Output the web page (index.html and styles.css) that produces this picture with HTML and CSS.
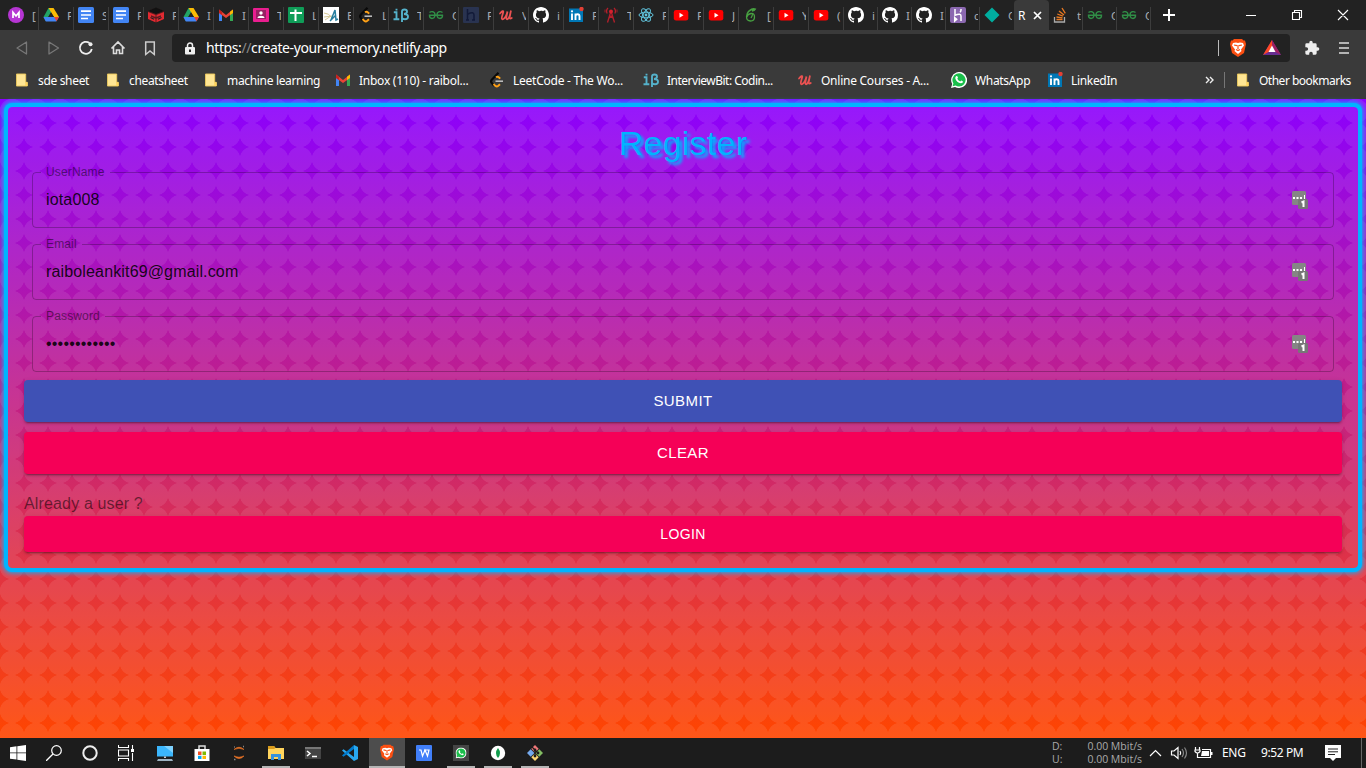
FILE: index.html
```html
<!DOCTYPE html>
<html lang="en">
<head>
<meta charset="utf-8">
<title>Register</title>
<link rel="stylesheet" href="styles.css">
</head>
<body>
<svg class="defs" width="0" height="0">
<symbol id="mm" viewBox="0 0 16 16"><circle cx="8" cy="8" r="8" fill="#b635d3"/><path d="M5 11V5.400L8 9l3-3.600V11" fill="none" stroke="#fff" stroke-width="1.700"/></symbol>
<symbol id="drive" viewBox="0 0 16 16"><path d="M5.500 1h5L5 10.500 2.700 14 .5 10z" fill="#21a464"/><path d="M5.500 1h5L16 10h-5z" fill="#fbbc04"/><path d="M.5 10l2.300 4.500h10.500L16 10z" fill="#4285f4"/><path d="M8 5.400L10.800 10H5.200z" fill="#222"/><path d="M11 10h5l-2.500 4.300z" fill="#ea4335"/></symbol>
<symbol id="docs" viewBox="0 0 16 16"><rect width="16" height="16" rx="1.500" fill="#4285f4"/><path d="M3 4.200h10M3 8h10M3 11.500h7" stroke="#fff" stroke-width="1.700"/></symbol>
<symbol id="cube" viewBox="0 0 16 16"><path d="M0 4l8-3 8 3v8l-8 3.500L0 12z" fill="#5a1b1f"/><path d="M0 4l8-3.500L16 4 8 7z" fill="#111"/><path d="M0 5l7.500 3v2L3 8.300v1.500l4.500 2v3.500L0 12zM16 5L8.500 8v2L13 8.300v1.500l-4.500 2v3.500L16 12z" fill="#e12a31"/><path d="M2.500 10.500l3.500 1.700M13.500 10.500L10 12.200" stroke="#222" stroke-width="1.200"/></symbol>
<symbol id="gmail" viewBox="0 0 16 16"><path d="M1 3v11h3V6z" fill="#4285f4"/><path d="M12 6v8h3V3z" fill="#34a853"/><path d="M1 2.500L8 8l7-5.500V6l-7 5-7-5z" fill="#ea4335"/><path d="M12 4.800l3-2.300V6l-3 2z" fill="#fbbc04"/><path d="M1 2.500l3 2.300V8L1 6z" fill="#c5221f"/></symbol>
<symbol id="class" viewBox="0 0 16 16"><rect y="1" width="16" height="14" rx="1" fill="#e91e8f"/><path d="M3 3h10v9H3z" fill="#982063"/><circle cx="8" cy="6" r="1.700" fill="#fff"/><path d="M4.500 11c0-3 7-3 7 0z" fill="#fff"/></symbol>
<symbol id="sheet" viewBox="0 0 16 16"><rect width="16" height="16" rx="1" fill="#0f9d58"/><path d="M2 6h12M7.500 2.500V14" stroke="#fff" stroke-width="2"/></symbol>
<symbol id="wave" viewBox="0 0 16 16"><path d="M0 0h16v16H0z" fill="#fff"/><path d="M1 6q5 0 8 5M1 10l8-1M2 13l6-4" stroke="#d6c994" fill="none"/><path d="M8 13l4-10 1 10 2-1M7 14l6-6" stroke="#277e9e" fill="none" stroke-width="1.500"/></symbol>
<symbol id="leet" viewBox="0 0 16 16"><path d="M9.500 .8L3 7.500q-1.800 2 0 3.700l2.200 2.500" fill="none" stroke="#090909" stroke-width="2.200"/><path d="M4.500 12l1.800 1.800q1.500 1.200 3 0l1.700-1.600M7 5.300q1.500-1 3 .2L11.200 6.700" fill="none" stroke="#ffa116" stroke-width="1.900"/><path d="M6.500 9.200H14" stroke="#bbb" stroke-width="1.600"/></symbol>
<symbol id="ib" viewBox="0 0 16 16"><path d="M.8 5.300h2.700V12M.5 12.200h5.800M3.500 1.800v1.800M9 15V4.500Q9 2.500 11.500 2.500 14 2.500 14 4.800q0 2-3 2.200 4 .1 4 2.700 0 2.500-3 2.500-2 0-3-1" fill="none" stroke="#55b2cb" stroke-width="1.900"/></symbol>
<symbol id="gfg" viewBox="0 0 16 16"><path d="M1.500 5.500Q3 4.300 4.800 4.700 7.200 5.500 7 8.500 6.500 11.500 4 11.500 1.300 11.200 1.500 8.300h13q.2 2.900-2.500 3.200-2.500 0-3-3Q8.800 5.500 11.200 4.700 13 4.300 14.500 5.500" fill="none" stroke="#308d46" stroke-width="1.400"/></symbol>
<symbol id="hh" viewBox="0 0 16 16"><rect width="16" height="16" rx="1" fill="#293350"/><path d="M4.500 2v11M3 13h3M5 7q6-3 6 1v5M9 13h3" fill="none" stroke="#121a38" stroke-width="1.500"/></symbol>
<symbol id="ud" viewBox="0 0 16 16"><path d="M2 6.500Q5.500 2.500 5.300 5L4 9.500q-.8 3.300 1 2.700Q7.800 11 9.500 4.500L8.500 9.500q-.6 3.200 1 2.700Q11.600 11 13 3.500l-1.200 6q-.5 3.200 2 1.500" fill="none" stroke="#eb5252" stroke-width="1.700" stroke-linecap="round"/></symbol>
<symbol id="git" viewBox="0 0 16 16"><path fill="#fff" fill-rule="evenodd" d="M8 0C3.580 0 0 3.580 0 8c0 3.540 2.290 6.530 5.470 7.590.4.070.55-.17.55-.38 0-.19-.01-.82-.01-1.490-2.010.37-2.530-.49-2.690-.94-.09-.23-.48-.94-.82-1.130-.28-.15-.68-.52-.01-.53.63-.01 1.080.58 1.230.82.72 1.210 1.870.87 2.330.66.070-.52.28-.87.510-1.070-1.780-.2-3.640-.89-3.640-3.950 0-.87.31-1.590.82-2.150-.08-.2-.36-1.020.08-2.120 0 0 .67-.21 2.200.82A7.600 7.600 0 018 3.860c.68 0 1.360.09 2 .27 1.530-1.040 2.200-.82 2.200-.82.44 1.100.16 1.920.08 2.120.51.56.82 1.270.82 2.150 0 3.070-1.870 3.750-3.650 3.950.29.25.54.73.54 1.480 0 1.070-.01 1.930-.01 2.200 0 .21.15.46.55.38A8 8 0 0016 8c0-4.420-3.580-8-8-8z"/></symbol>
<symbol id="li" viewBox="0 0 16 16"><path d="M1 1.500h14V15H1z" fill="#0077b5"/><path d="M4 6.500V13M7.500 13V6.500M7.500 9q0-1.800 2-1.800t2 2V13" fill="none" stroke="#fff" stroke-width="1.900"/><circle cx="4" cy="4.300" r="1.100" fill="#fff"/><circle cx="13.500" cy="2" r="2.200" fill="#e34035"/></symbol>
<symbol id="tower" viewBox="0 0 16 16"><path d="M8 4L4.500 15.500M8 4l3.500 11.500M6.500 8.500l4 3M9.500 8.500l-4 3M5 1q-2.500 2.500-.8 5.500M11 1q2.500 2.500.8 5.500" fill="none" stroke="#b61f2b" stroke-width="1.300"/><path d="M2 2.500v3M14 2.500v3" stroke="#9a1f29"/><circle cx="8" cy="4.500" r="2" fill="#d7202e"/></symbol>
<symbol id="react" viewBox="0 0 16 16"><g fill="none" stroke="#61c5de"><ellipse cx="8" cy="8" rx="7" ry="2.800"/><ellipse cx="8" cy="8" rx="7" ry="2.800" transform="rotate(60 8 8)"/><ellipse cx="8" cy="8" rx="7" ry="2.800" transform="rotate(120 8 8)"/></g><circle cx="8" cy="8" r="1.400" fill="#61c5de"/></symbol>
<symbol id="yt" viewBox="0 0 16 16"><rect x=".8" y="3" width="14.500" height="10.500" rx="2.300" fill="red"/><path d="M6.500 5.800v5L10.500 8.300z" fill="#fff"/></symbol>
<symbol id="six" viewBox="0 0 16 16"><path d="M11 2Q4 3 3.500 9.500 3.500 14 7.500 14q4 0 4-4T8 6.500Q4.500 7 3.800 10M8 11q2-3 1-4M6.500 3.500q3-2.800 6-1.500-1 2-3.500 2" fill="none" stroke="#47a141" stroke-width="1.300"/></symbol>
<symbol id="her" viewBox="0 0 16 16"><rect width="16" height="16" rx="2" fill="#8b68b0"/><path d="M5 2v6.200Q11 6 11 9v5M11 2v1q0 1.300-1 2.300M4.700 10.500V14l2-1.800z" fill="none" stroke="#fff" stroke-width="1.500"/></symbol>
<symbol id="dia" viewBox="0 0 16 16"><path d="M8 .5L15.500 8 8 15.500.5 8z" fill="#00ad9f"/></symbol>
<symbol id="so" viewBox="0 0 16 16"><path d="M1.500 10v5h10v-5" fill="none" stroke="#aaa" stroke-width="1.300"/><path d="M3.500 12.500h6M3.500 10l6 .8M4.300 7l5.600 2.200M6 4l5 4M9 1l3.300 5.300" stroke="#e87922" stroke-width="1.300"/></symbol>
<symbol id="folder" viewBox="0 0 13 14"><path d="M.5.500h10v9h1.800v4H.5z" fill="#ffe694" stroke="#edc95c"/><path d="M10 9.500v4h2.300v-4z" fill="#ffd35d"/></symbol>
<symbol id="wa" viewBox="0 0 16 16"><path d="M0 16l1.200-4A8 8 0 118 16a8 8 0 01-4-1z" fill="#fff"/><path d="M1.600 14.300l.8-2.800A6.600 6.600 0 118 14.600c-1.300 0-2.400-.4-3.300-1z" fill="#1abf4b"/><path d="M5 4.200q1-.7 1.500.2l.5 1.300-.7 1q1 2 3 2.800l1-1 1.700 1q.2 1.600-2 1.800Q5.500 10.500 4.300 6.500 4.200 5 5 4.200z" fill="#fff"/></symbol>
<symbol id="brave" viewBox="0 0 16 18"><path d="M4 0h8l1.500 1.500H15L16 5l-2 9-6 4-6-4L0 5l1-3.500h1.500z" fill="#fb4f12"/><path d="M3 4l3-.5L8 4l2-.5 3 .5 1 2.500-3 4 .5 1.500L8 15l-3.500-3 .5-1.500-3-4z" fill="#fff"/><path d="M4 6l3 .7M12 6l-3 .7M8 6v4M6 10.500l2 1 2-1" fill="none" stroke="#fb4f12" stroke-width="1.200"/></symbol>
<symbol id="keyicon" viewBox="0 0 16 18"><rect width="14" height="14" rx="1.500" fill="#858585"/><rect x="6" y="8" width="10" height="10" rx="1.500" fill="#777"/><path d="M1 7h2M4.500 7h2M8 7h2" stroke="#fff" stroke-width="2"/><path d="M12.500 4v4" stroke="#fff"/><path d="M9.500 11.500l2-1V16" fill="none" stroke="#fff" stroke-width="2"/></symbol>
</svg>

<header class="tabs">
<div class="tab"><svg><use href="#mm"/></svg><span>[</span></div><div class="tab"><svg><use href="#drive"/></svg><span>F</span></div><div class="tab"><svg><use href="#docs"/></svg><span>S</span></div><div class="tab"><svg><use href="#docs"/></svg><span>F</span></div><div class="tab"><svg><use href="#cube"/></svg><span>F</span></div><div class="tab"><svg><use href="#drive"/></svg><span>I</span></div><div class="tab"><svg><use href="#gmail"/></svg><span>I</span></div><div class="tab"><svg><use href="#class"/></svg><span>T</span></div><div class="tab"><svg><use href="#sheet"/></svg><span>L</span></div><div class="tab"><svg><use href="#wave"/></svg><span>E</span></div><div class="tab"><svg><use href="#leet"/></svg><span>L</span></div><div class="tab"><svg><use href="#ib"/></svg><span>T</span></div><div class="tab"><svg><use href="#gfg"/></svg><span>C</span></div><div class="tab"><svg><use href="#hh"/></svg><span>F</span></div><div class="tab"><svg><use href="#ud"/></svg><span>V</span></div><div class="tab"><svg><use href="#git"/></svg><span>i</span></div><div class="tab"><svg><use href="#li"/></svg><span>F</span></div><div class="tab"><svg><use href="#tower"/></svg><span>T</span></div><div class="tab"><svg><use href="#react"/></svg><span>F</span></div><div class="tab"><svg><use href="#yt"/></svg><span>F</span></div><div class="tab"><svg><use href="#yt"/></svg><span>J</span></div><div class="tab"><svg><use href="#six"/></svg><span>[</span></div><div class="tab"><svg><use href="#yt"/></svg><span>Y</span></div><div class="tab"><svg><use href="#yt"/></svg><span>(</span></div>
<div class="tab slim"><svg><use href="#git"/></svg><span>i</span></div><div class="tab slim"><svg><use href="#git"/></svg><span>I</span></div><div class="tab slim"><svg><use href="#git"/></svg><span>I</span></div><div class="tab slim"><svg><use href="#her"/></svg><span>c</span></div><div class="tab slim last"><svg><use href="#dia"/></svg><span>C</span></div>
<div class="tab active"><span>R</span><svg class="close" viewBox="0 0 9 9"><path d="M1 1l7 7M8 1L1 8" stroke="#fff" stroke-width="1.700"/></svg></div>
<div class="tab slim"><svg><use href="#so"/></svg><span>t</span></div><div class="tab slim"><svg><use href="#gfg"/></svg><span>C</span></div><div class="tab slim"><svg><use href="#gfg"/></svg><span>C</span></div>
<svg class="plus" viewBox="0 0 12 12"><path d="M6 0v12M0 6h12" stroke="#fff" stroke-width="2"/></svg>
<svg class="winctl" viewBox="0 0 104 12"><path d="M0 6.500h10M46.500 3.500h7v7h-7zM48.500 3.500v-2h7v7h-2M92 1l10 10M102 1L92 11" fill="none" stroke="#fff" stroke-width="1.100"/></svg>
</header>

<nav class="toolbar">
<svg class="nav" viewBox="0 0 170 28"><g fill="none"><path d="M26.500 8v12L17 14zM49 8v12l9.500-6z" stroke="#777" stroke-width="1.300" stroke-linejoin="round"/><path d="M89.500 9A6 6 0 1091.800 15" stroke="#eee" stroke-width="1.800"/><circle cx="90.500" cy="10.300" r="2" fill="#eee"/><path d="M111.500 14.500l6.500-6.500 6.500 6.500M113.500 13v6.500h3V16h3v3.500h3V13" stroke="#ddd" stroke-width="1.600"/><path d="M145.700 8h8.600v12.500L150 17l-4.300 3.500z" stroke="#ccc" stroke-width="1.500"/></g></svg>
<div class="address"><svg class="lock" viewBox="0 0 10 13"><path d="M2.500 6V3.500a2.500 2.500 0 015 0V6" fill="none" stroke="#eee" stroke-width="1.500"/><rect y="5" width="10" height="7.500" rx="1" fill="#eee"/><path d="M4 7.500h2v2.500H4z" fill="#222"/></svg><span class="url">https:<i>//</i>create-your-memory.netlify.app</span><b class="bar"></b><svg class="lion"><use href="#brave"/></svg><svg class="bat" viewBox="0 0 18 16"><path d="M9 0L0 15h18z" fill="#662d91"/><path d="M9 0L0 15l9-5z" fill="#ff4724"/><path d="M9 0l9 15-9-5z" fill="#9e1f63"/><path d="M9 5.500L5.500 12h7z" fill="#fff"/></svg></div>
<svg class="puzzle" viewBox="0 0 24 24"><path fill="#eee" d="M20.500 11H19V7a2 2 0 00-2-2h-4V3.500a2.500 2.500 0 00-5 0V5H4a2 2 0 00-2 2v3.800h1.500a2.700 2.700 0 010 5.400H2V20a2 2 0 002 2h3.800v-1.500a2.700 2.700 0 015.400 0V22H17a2 2 0 002-2v-4h1.500a2.500 2.500 0 000-5z"/></svg>
<svg class="menu" viewBox="0 0 10 12"><path d="M0 1h10M0 6h10M0 11h10" stroke="#ddd" stroke-width="1.500"/></svg>
</nav>

<nav class="bookmarks">
<a class="w1"><svg class="f"><use href="#folder"/></svg>sde sheet</a><a class="w2"><svg class="f"><use href="#folder"/></svg>cheatsheet</a><a class="w3"><svg class="f"><use href="#folder"/></svg>machine learning</a><a class="w4"><svg><use href="#gmail"/></svg>Inbox (110) - raibol...</a><a class="w5"><svg><use href="#leet"/></svg>LeetCode - The Wo...</a><a class="w6"><svg><use href="#ib"/></svg>InterviewBit: Codin...</a><a class="w7"><svg><use href="#ud"/></svg>Online Courses - A...</a><a class="w8"><svg><use href="#wa"/></svg>WhatsApp</a><a class="w9"><svg><use href="#li"/></svg>LinkedIn</a>
<svg class="more" viewBox="0 0 9 8"><path d="M1 1l3 3-3 3M5 1l3 3-3 3" fill="none" stroke="#eee" stroke-width="1.400"/></svg><b class="bar"></b><a class="other"><svg class="f"><use href="#folder"/></svg>Other bookmarks</a>
</nav>

<main class="page">
<form class="card">
<h4>Register</h4>
<fieldset><legend>UserName</legend><span>iota008</span><svg class="key"><use href="#keyicon"/></svg></fieldset>
<fieldset><legend>Email</legend><span>raiboleankit69@gmail.com</span><svg class="key"><use href="#keyicon"/></svg></fieldset>
<fieldset><legend>Password</legend><span class="dots">••••••••••••</span><svg class="key"><use href="#keyicon"/></svg></fieldset>
<button type="button" class="submit">SUBMIT</button>
<button type="button" class="clear">CLEAR</button>
<p>Already a user ?</p>
<button type="button" class="login">LOGIN</button>
</form>
</main>

<footer class="taskbar">
<div class="app"><svg viewBox="0 0 16 16"><path d="M0 2.300l6.500-1v6.200H0zM7.300 1.200L16 0v7.500H7.300zM0 8.300h6.500v6.300L0 13.700zM7.300 8.300H16V16l-8.700-1.200z" fill="#fff"/></svg></div>
<div class="app"><svg viewBox="0 0 16 16"><circle cx="10.500" cy="5.500" r="4.800" fill="none" stroke="#fff" stroke-width="1.200"/><path d="M7 9l-7 7" stroke="#fff" stroke-width="1.300"/></svg></div>
<div class="app"><svg viewBox="0 0 16 16"><circle cx="8" cy="8" r="6.700" fill="none" stroke="#eee" stroke-width="2"/></svg></div>
<div class="app"><svg viewBox="0 0 16 16"><path d="M.5 0v2.500h10V0M.5 5h10v6H.5zM.5 16v-2.500h10V16M14.500 0v4M14.500 8v8" fill="none" stroke="#fff" stroke-width="1.100"/><path d="M13 4h3v3h-3z" fill="#fff"/></svg></div>
<div class="app pc"><svg viewBox="0 0 16 16"><path d="M0 1h16v10.500H0z" fill="#3bb6fc"/><path d="M7 1h9v7z" fill="#7ed2ff"/><path d="M7 11.500h2V13H7z" fill="#ccc"/><path d="M1 14h14l1 2H0z" fill="#9eb3c2"/></svg></div>
<div class="app"><svg viewBox="0 0 16 16"><path d="M5 4V1h6v3" fill="none" stroke="#ddd" stroke-width="1.500"/><path d="M.5 4h15v12H.5z" fill="#fff"/><path d="M4 6.500h3.500V10H4z" fill="#f25022"/><path d="M8.500 6.500H12V10H8.500z" fill="#7fba00"/><path d="M4 10.800h3.500V14H4z" fill="#00a4ef"/><path d="M8.500 10.800H12V14H8.500z" fill="#ffb900"/></svg></div>
<div class="app"><svg viewBox="0 0 16 16"><path d="M3 4.500Q8 0 13 4.500 8 2 3 4.500zM3 11q5 5 10 0-5 2.500-10 0z" fill="#f37726" stroke="#f37726" stroke-width=".6"/><path d="M12 1.500h1M3 14.500h1.500M3 2h.8" stroke="#888" stroke-width="1.500"/></svg></div>
<div class="app open"><svg viewBox="0 0 16 16"><path d="M0 1h6l1.500 2H16v11H0z" fill="#ffd45d"/><path d="M0 1h6l1.500 2L6 4H0z" fill="#d99b1c"/><path d="M3 15V9h10v6h-3v-3H6v3z" fill="#3692dc"/></svg></div>
<div class="app"><svg viewBox="0 0 16 16"><path d="M0 2h16v12H0z" fill="#444"/><path d="M0 2h16v2H0z" fill="#777"/><path d="M2 6l3 2.500L2 11M7 11.500h5" fill="none" stroke="#fff" stroke-width="1.500"/></svg></div>
<div class="app"><svg viewBox="0 0 16 16"><path d="M12 0l4 2v12l-4 2L0 5.500l1.500-1.200L12 12V4z" fill="#28a8f0"/><path d="M12 0v4L1.500 11.800 0 10.500z" fill="#007acc"/></svg></div>
<div class="app open current"><svg class="tall"><use href="#brave"/></svg></div>
<div class="app"><svg viewBox="0 0 16 16"><rect width="16" height="16" rx="1" fill="#417ff9"/><path d="M3 5h2l1.500 6L9 5l2.500 6L13 5H8" fill="none" stroke="#fff" stroke-width="1.200"/></svg></div>
<div class="app open"><svg viewBox="0 0 16 16"><path d="M0 0h16v16H0z" fill="#454545"/><use href="#wa" x="2.500" y="2.500" width="11" height="11"/></svg></div>
<div class="app open"><svg viewBox="0 0 16 16"><circle cx="8" cy="8" r="7.200" fill="#fff"/><path d="M8 3q4 5 0 10Q4 8 8 3z" fill="#109b4b"/></svg></div>
<div class="app open"><svg viewBox="0 0 16 16"><path d="M8 0l3.700 3.700L8 7.400 4.300 3.700z" fill="#ef7879"/><path d="M3.700 4.300L7.400 8l-3.700 3.700L0 8z" fill="#75a9ed"/><path d="M12.300 4.300L16 8l-3.700 3.700L8.600 8z" fill="#83bd63"/><path d="M8 8.600l3.700 3.700L8 16l-3.700-3.700z" fill="#fcd471"/><path d="M5 2l6 6M8 5v6" stroke="#1c1c1c" stroke-width="1.200"/><circle cx="8" cy="5" r="1.400" fill="#1c1c1c"/><circle cx="8" cy="11" r="1.400" fill="#1c1c1c"/><circle cx="11" cy="8" r="1.400" fill="#1c1c1c"/></svg></div>
<div class="net"><div><span>D:</span><span>0.00 Mbit/s</span></div><div><span>U:</span><span>0.00 Mbit/s</span></div></div>
<svg class="tray" viewBox="0 0 64 16"><g fill="none" stroke="#fff" stroke-width="1.200"><path d="M1 11l5.500-5.500L12 11"/><path d="M22.500 6H25l4-3.500v11L25 10h-2.500z"/><path d="M31 6q1.500 2 0 4"/><path d="M33 4q3 4 0 8M35.500 2.500q4 5.500 0 11" stroke="#888"/><path d="M53 4.500h8.500v8H50"/><path d="M46.500 2v3M50.500 2v3M46 5h5v1.500q-2.500 3-5 0zM48.500 8v4.500h2"/></g><path d="M53 6h7v5h-8zM62 7h1.500v3H62z" fill="#fff"/></svg>
<span class="lang">ENG</span><span class="clock">9:52 PM</span>
<svg class="note" viewBox="0 0 16 16"><path d="M0 0h16v13h-5l-3 3-3-3H0z" fill="#fff"/><path d="M3 4h10M3 6.800h10M3 9.500h7" stroke="#222"/></svg><b class="edge"></b>
</footer>
</body>
</html>
```
FILE: styles.css
```css
* { box-sizing: border-box; }
body {
  margin: 0; width: 1366px; height: 768px; overflow: hidden;
  display: flex; flex-direction: column;
  font-family: "Noto Sans", "Open Sans", sans-serif; font-size: 12px; color: #fff;
  background: #222;
}
svg { display: block; flex: none; }
.defs { position: absolute; }
.tabs { height: 30px; flex: none; display: flex; align-items: center; padding-left: 4px; background: #222; }
.tab { width: 35px; height: 30px; flex: none; display: flex; align-items: center; padding-left: 4px; position: relative; }
.tab.slim { width: 34px; }
.tab > svg { width: 16px; height: 16px; }
.tab span { width: 4px; margin-left: 8px; overflow: hidden; color: #a9adb4; font-size: 11.5px; }
.tab::after { content: ""; position: absolute; right: 0; top: 7px; width: 1px; height: 23px; background: #3d3d3d; }
.tab.last::after, .tab.active::after { display: none; }
.tab.active { background: #3a3a3a; border-radius: 4px 4px 0 0; }
.tab.active span { width: 8px; margin-left: 0; color: #fff; font-size: 12px; }
.tab > svg.close { width: 9px; height: 9px; margin-left: 7px; }
.plus { width: 12px; height: 12px; margin-left: 12px; }
.winctl { width: 104px; height: 12px; margin-left: 71px; }
.toolbar { height: 36px; flex: none; background: #3a3a3a; display: flex; align-items: center; }
.nav { width: 170px; height: 28px; }
.address { width: 1118px; height: 28px; margin-left: 2px; padding-left: 13px; background: #222; border-radius: 4px; display: flex; align-items: center; }
.lock { width: 10px; height: 13px; }
.url { margin-left: 11px; width: 1012px; font-size: 14px; letter-spacing: -.4px; line-height: 18px; padding-bottom: 1px; white-space: nowrap; }
.url i { font-style: normal; color: #888; }
.bar { width: 1px; height: 16px; background: #777; flex: none; }
.address .bar { background: #bbb; }
.lion { width: 16px; height: 18px; margin-left: 11px; }
.bat { width: 18px; height: 16px; margin-left: 17px; }
.puzzle { width: 16px; height: 16px; margin-left: 14px; }
.menu { width: 10px; height: 12px; margin-left: 19px; }
.bookmarks { height: 33px; flex: none; background: #3a3a3a; padding: 0 0 5px 16px; display: flex; align-items: center; }
.bookmarks a { display: flex; align-items: center; white-space: nowrap; flex: none; letter-spacing: -.33px; }
.bookmarks a svg { width: 16px; height: 16px; margin-right: 8px; }
.bookmarks a svg.f { width: 12px; height: 14px; margin-right: 10px; }
.bookmarks a.other { letter-spacing: -.5px; }
.bookmarks a.w6 { letter-spacing: -.5px; }
.w1 { width: 91px; } .w2 { width: 98px; } .w3 { width: 130px; } .w4 { width: 154px; }
.w5 { width: 154px; } .w6 { width: 154px; } .w7 { width: 154px; } .w8 { width: 96px; } .w9 { width: 158px; }
.bookmarks a.w4, .bookmarks a.w5, .bookmarks a.w7 { letter-spacing: -.25px; }
.more { width: 9px; height: 8px; }
.bookmarks .bar { margin: 0 12px 0 10px; }

.page {
  height: 639px; flex: none; padding: 8px;
  font-family: "Liberation Sans", Arial, sans-serif; font-size: 16px;
  background:
    radial-gradient(circle at 12px 12px, rgba(255,255,255,.09) 11.9px, transparent 12.5px) 0 0 / 24px 24px,
    linear-gradient(#8b00ff, #ff4500);
}
.card {
  height: 461px; padding: 16px; border-radius: 4px; display: flex; flex-direction: column;
  box-shadow: 0 0 0 4px #00b4ff, 0 0 5px 5px #00b4ff;
}
h4 { margin: -1px 0 0; height: 42px; flex: none; line-height: 42px; text-align: center; font-size: 34px; font-weight: 400; letter-spacing: .25px; color: #00b4ff; text-shadow: 3px 3px 3px #00b4ff; }
fieldset { position: relative; height: 61px; min-width: 0; flex: none; margin: 0 8px 11px; padding: 0 8px; border: 1px solid rgba(0,0,0,.25); border-radius: 4px; color: rgba(0,0,0,.87); }
h4 + fieldset { margin-top: 3px; }
legend { height: 11px; padding: 0 5px; font-size: 12px; line-height: 11px; letter-spacing: .15px; color: rgba(0,0,0,.5); }
fieldset span { display: block; padding: 12px 5px 0; line-height: 19px; letter-spacing: .15px; }
.key { position: absolute; width: 16px; height: 18px; right: 25px; top: 13px; }
fieldset .dots { letter-spacing: .2px; }
button { flex: none; height: 42px; border: 0; border-radius: 4px; padding: 0 0 1px; color: #fff; font: 15px "Liberation Sans", Arial, sans-serif; letter-spacing: .4px; background: #f50057; box-shadow: 0 3px 1px -2px rgba(0,0,0,.2), 0 2px 2px rgba(0,0,0,.14), 0 1px 5px rgba(0,0,0,.12); }
.submit { background: #3f51b5; margin-bottom: 10px; margin-top: -3px; }
p { margin: 20px 0 4px; height: 18px; flex: none; line-height: 19px; color: rgba(0,0,0,.54); letter-spacing: .15px; }
.login { height: 36px; padding: 0; font-size: 14px; }

.taskbar { height: 30px; flex: none; background: #1c1c1c; display: flex; align-items: center; }
.app { width: 36px; height: 30px; flex: none; display: flex; align-items: center; justify-content: center; border-bottom: 2px solid transparent; padding-top: 1px; }
.app svg { width: 16px; height: 16px; }
.app svg.tall { height: 17px; width: 14px; }
.app.pc { margin-left: 7px; }
.app.pc, .app.pc ~ .app { width: 28px; }
.app.pc ~ .app { margin-left: 9px; }
.app.open { border-color: #b5b5b5; }
.app.pc ~ .app.current { width: 36px; margin: 0 -4px 0 5px; background: #4d4d4d; }
.net { width: 90px; margin-left: auto; font-family: "Open Sans", sans-serif; font-size: 10.5px; line-height: 13px; color: #aaa; }
.net div { display: flex; justify-content: space-between; }
.tray { width: 64px; height: 16px; margin-left: 7px; }
.lang { width: 39px; margin-left: 9px; letter-spacing: -.3px; }
.clock { width: 64px; letter-spacing: -.4px; white-space: nowrap; }
.lang, .clock { padding-bottom: 1px; }
.note { width: 16px; height: 16px; }
.edge { width: 1px; height: 30px; background: #666; margin: 0 4px 0 20px; }
```
